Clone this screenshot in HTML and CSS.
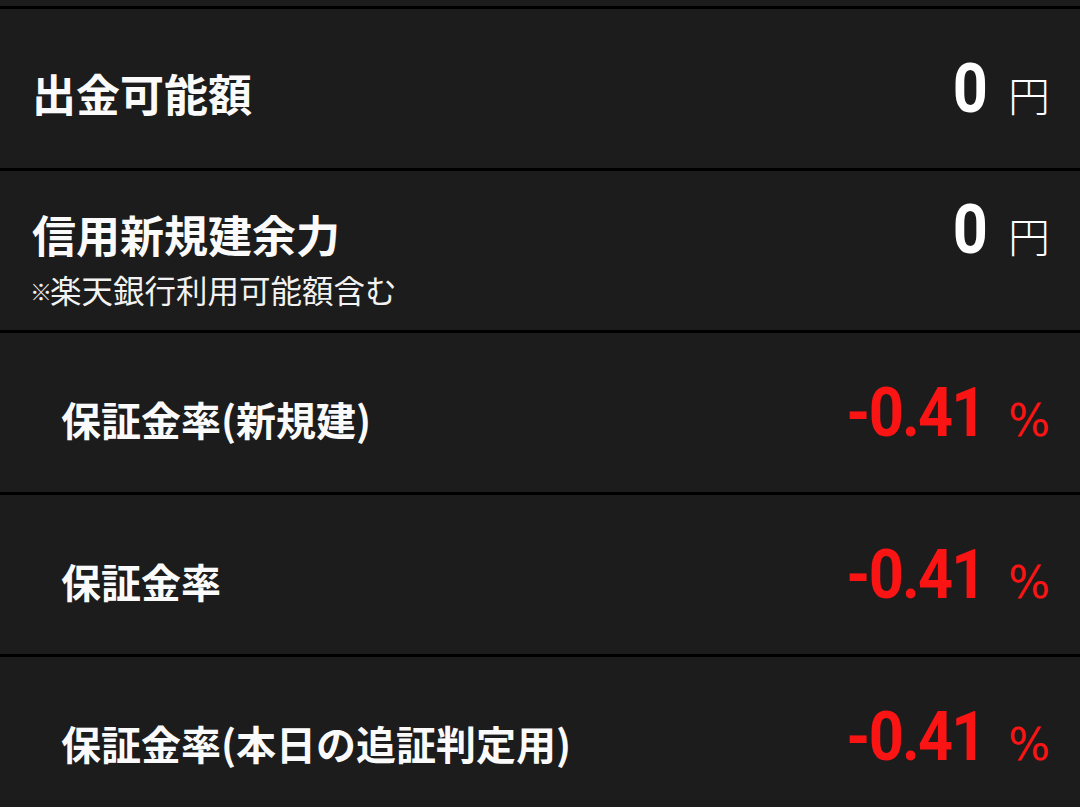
FILE: index.html
```html
<!DOCTYPE html>
<html lang="ja">
<head>
<meta charset="utf-8">
<title>余力</title>
<link rel="stylesheet" href="styles.css">
</head>
<body>
<div class="list">
  <div class="row">
    <div class="line">
      <div class="label big">出金可能額</div>
      <div class="value"><span class="num">0</span><span class="unit yen">円</span></div>
    </div>
  </div>
  <div class="row">
    <div class="line">
      <div class="label big">信用新規建余力<div class="sub"><span class="mark">※</span>楽天銀行利用可能額含む</div></div>
      <div class="value"><span class="num">0</span><span class="unit yen">円</span></div>
    </div>
  </div>
  <div class="row">
    <div class="line">
      <div class="label small">保証金率(新規建)</div>
      <div class="value neg"><span class="num">-0.41</span><span class="unit pct">%</span></div>
    </div>
  </div>
  <div class="row">
    <div class="line">
      <div class="label small">保証金率</div>
      <div class="value neg"><span class="num">-0.41</span><span class="unit pct">%</span></div>
    </div>
  </div>
  <div class="row">
    <div class="line">
      <div class="label small">保証金率(本日の追証判定用)</div>
      <div class="value neg"><span class="num">-0.41</span><span class="unit pct">%</span></div>
    </div>
  </div>
</div>
</body>
</html>
```
FILE: styles.css
```css
html, body {
  margin: 0;
  padding: 0;
  background: #1c1c1c;
}
body {
  width: 1080px;
  height: 807px;
  overflow: hidden;
  font-family: "Noto Sans CJK JP", "Noto Sans", sans-serif;
  color: #fafafa;
}
.list {
  padding-top: 6px;
}
.row {
  height: 159px;
  border-top: 3px solid #000;
  display: flex;
  flex-direction: column;
  justify-content: center;
  padding: 0 30px 0 32px;
}
.line {
  display: flex;
  align-items: baseline;
  justify-content: space-between;
}
.label {
  font-weight: 700;
}
.label.big {
  font-size: 44px;
}
.label.small {
  font-size: 40px;
  padding-left: 29px;
}
.sub {
  font-size: 31.5px;
  font-weight: 400;
  color: #f2f2f2;
  margin-left: -2px;
}
.mark {
  font-size: 22px;
  vertical-align: 3px;
  margin-right: -2px;
}
.value {
  display: flex;
  align-items: baseline;
  color: #ffffff;
}
.num {
  display: inline-block;
  font-family: Roboto, "Liberation Sans", sans-serif;
  font-weight: 700;
  font-size: 68px;
  letter-spacing: -2px;
  transform: scaleX(0.9);
  transform-origin: right center;
}
.unit {
  margin-left: 22px;
}
.yen {
  font-family: "Noto Sans CJK JP", sans-serif;
  font-weight: 300;
  font-size: 42px;
}
.pct {
  font-family: "DejaVu Sans", sans-serif;
  font-weight: 400;
  font-size: 44px;
  margin-left: 24px;
}
.neg {
  color: #fa1414;
}
```
